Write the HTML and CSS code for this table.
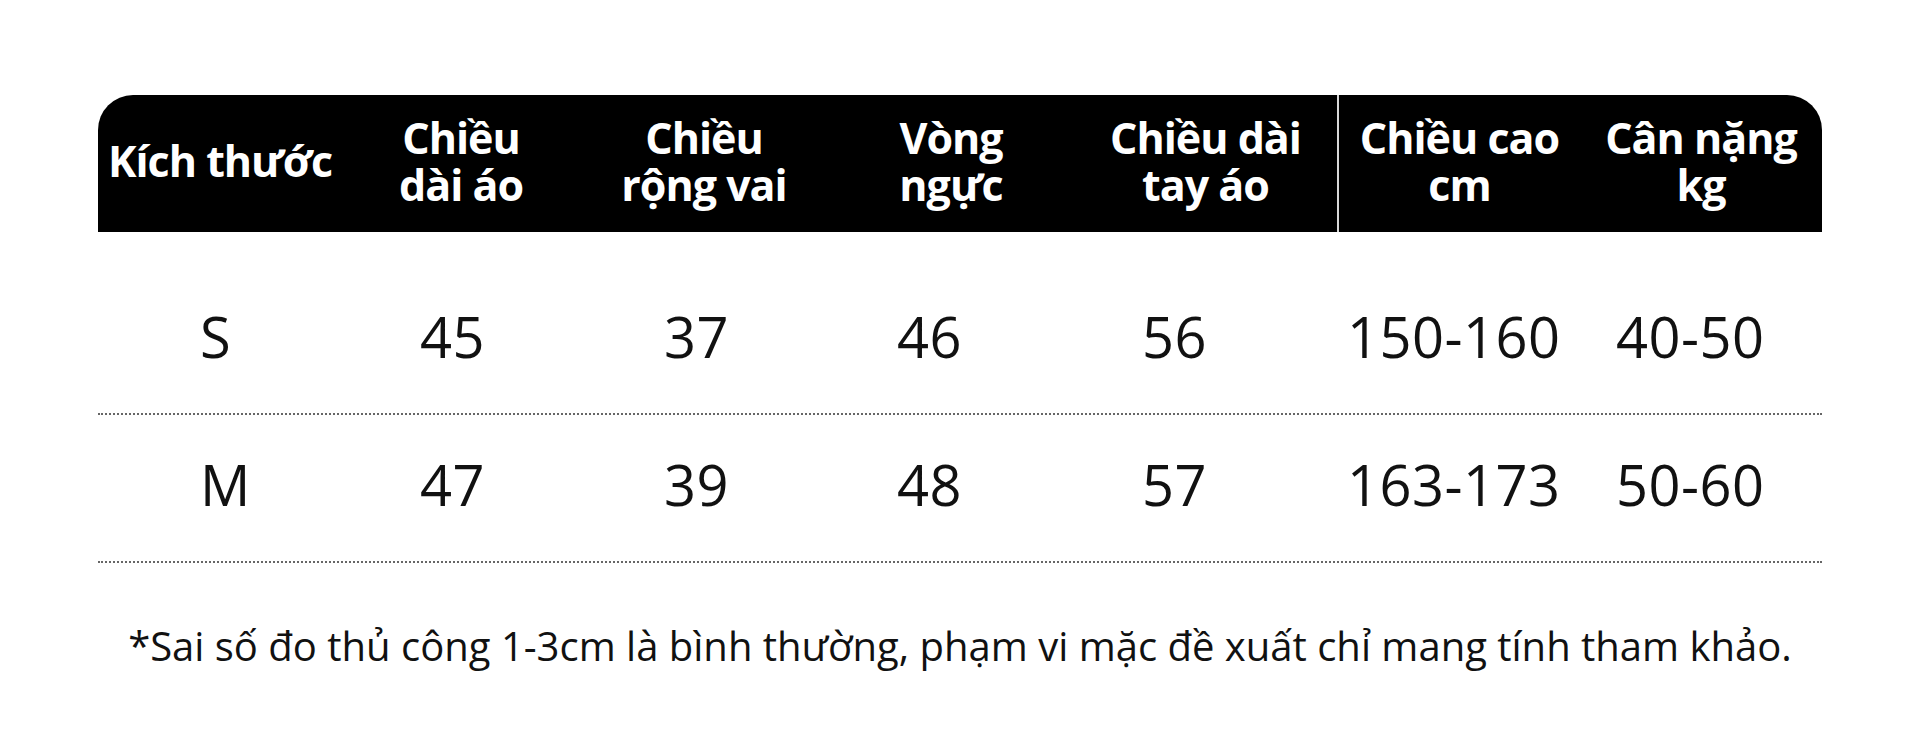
FILE: index.html
```html
<!DOCTYPE html>
<html lang="vi">
<head>
<meta charset="utf-8">
<title>Bảng kích thước</title>
<link rel="stylesheet" href="styles.css">
</head>
<body>
<main class="page">
  <section class="size-table">
    <div class="head">
      <div class="hcell">Kích thước</div>
      <div class="hcell">Chiều<br>dài áo</div>
      <div class="hcell">Chiều<br>rộng vai</div>
      <div class="hcell">Vòng<br>ngực</div>
      <div class="hcell">Chiều dài<br>tay áo</div>
      <div class="hcell hcell-split">Chiều cao<br>cm</div>
      <div class="hcell">Cân nặng<br>kg</div>
    </div>
    <div class="body">
      <div class="row">
        <div class="cell">S</div>
        <div class="cell">45</div>
        <div class="cell">37</div>
        <div class="cell">46</div>
        <div class="cell">56</div>
        <div class="cell">150-160</div>
        <div class="cell">40-50</div>
      </div>
      <div class="row">
        <div class="cell">M</div>
        <div class="cell">47</div>
        <div class="cell">39</div>
        <div class="cell">48</div>
        <div class="cell">57</div>
        <div class="cell">163-173</div>
        <div class="cell">50-60</div>
      </div>
    </div>
  </section>
  <p class="note">*Sai số đo thủ công 1-3cm là bình thường, phạm vi mặc đề xuất chỉ mang tính tham khảo.</p>
</main>
</body>
</html>
```

FILE: styles.css
```css
* { box-sizing: border-box; }

html, body {
  margin: 0;
  padding: 0;
  background: #ffffff;
}

body {
  width: 1920px;
  height: 744px;
  overflow: hidden;
  font-family: "Open Sans", "Noto Sans", sans-serif;
  color: #111111;
}

.page {
  padding: 95px 0 0 98px;
}

.size-table {
  width: 1724px;
}

.head {
  display: grid;
  grid-template-columns: 244px 238px 248px 246px 263px 243px 242px;
  height: 137px;
  background: #000000;
  border-radius: 35px 35px 0 0;
}

.hcell {
  display: flex;
  align-items: center;
  justify-content: center;
  text-align: center;
  color: #ffffff;
  font-weight: 700;
  font-size: 43px;
  line-height: 47px;
  letter-spacing: -1px;
  padding-bottom: 6px;
}

.hcell-split {
  border-left: 2px solid #d8d8d8;
}

.body {
  padding-top: 35px;
}

.row {
  display: grid;
  grid-template-columns: 220px 244px 233px 245px 205px 269px 1fr;
  padding: 39px 0 47px 102px;
  border-bottom: 2px dotted #666666;
}

.cell {
  text-align: left;
  font-size: 56px;
  line-height: 60px;
  font-weight: 400;
  letter-spacing: 0.5px;
  white-space: nowrap;
}

.note {
  margin: 58px 0 0 -98px;
  width: 1920px;
  text-align: center;
  font-size: 40px;
  line-height: 50px;
  letter-spacing: 0;
  color: #111111;
}
```
